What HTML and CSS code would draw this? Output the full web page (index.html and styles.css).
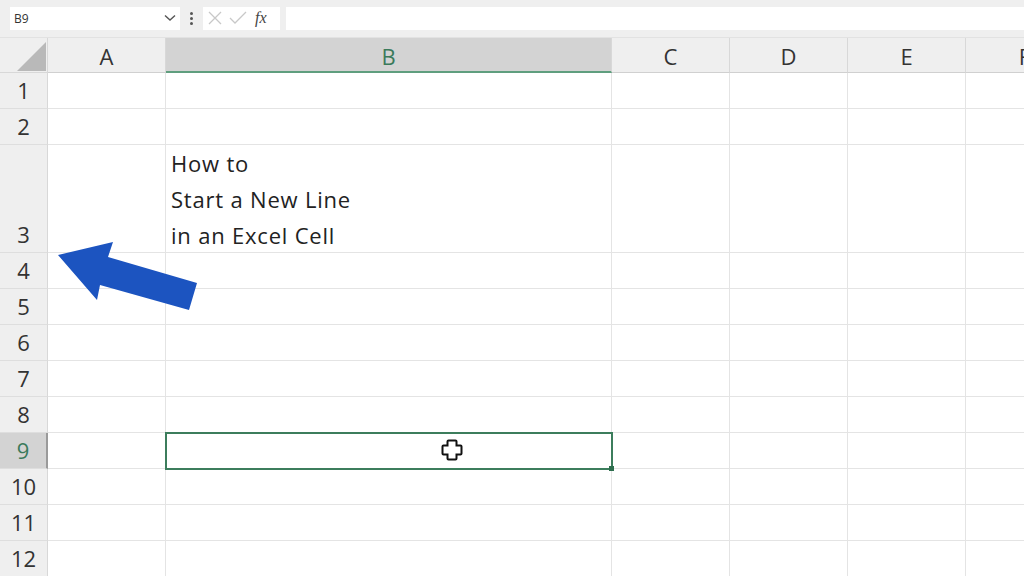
FILE: index.html
```html
<!DOCTYPE html>
<html lang="en">
<head>
    <meta charset="UTF-8">
    <title>Excel - new line in cell</title>
    <link rel="stylesheet" href="styles.css">
</head>
<body>
    <div class="app">
        <!-- formula bar -->
        <div class="formula-bar">
            <div class="name-box">
                <span>B9</span>
                <svg class="chevron" width="12" height="8" viewBox="0 0 12 8"><path d="M1 1.5 L6 6 L11 1.5" fill="none" stroke="#555" stroke-width="1.4"/></svg>
            </div>
            <div class="grip">
                <span></span><span></span><span></span>
            </div>
            <div class="fx-box">
                <svg width="16" height="16" viewBox="0 0 16 16"><path d="M2 2 L14 14 M14 2 L2 14" stroke="#c8c8c8" stroke-width="1.3"/></svg>
                <svg width="18" height="16" viewBox="0 0 18 16"><path d="M1 8 L6 13 L17 2" fill="none" stroke="#c8c8c8" stroke-width="1.3"/></svg>
                <span class="fx">fx</span>
            </div>
            <div class="formula-input"></div>
        </div>

        <!-- grid -->
        <div class="sheet">
            <div class="corner">
                <svg width="48" height="35" viewBox="0 0 48 35"><polygon points="17,33 46,33 46,4" fill="#b9b9b9"/></svg>
            </div>
            <div class="col-head">A</div>
            <div class="col-head active">B</div>
            <div class="col-head">C</div>
            <div class="col-head">D</div>
            <div class="col-head">E</div>
            <div class="col-head">F</div>

            <div class="row-head">1</div>
            <div class="cell"></div><div class="cell"></div><div class="cell"></div><div class="cell"></div><div class="cell"></div><div class="cell"></div>

            <div class="row-head">2</div>
            <div class="cell"></div><div class="cell"></div><div class="cell"></div><div class="cell"></div><div class="cell"></div><div class="cell"></div>

            <div class="row-head">3</div>
            <div class="cell"></div>
            <div class="cell text">How to<br>Start a New Line<br>in an Excel Cell</div>
            <div class="cell"></div><div class="cell"></div><div class="cell"></div><div class="cell"></div>

            <div class="row-head">4</div>
            <div class="cell"></div><div class="cell"></div><div class="cell"></div><div class="cell"></div><div class="cell"></div><div class="cell"></div>

            <div class="row-head">5</div>
            <div class="cell"></div><div class="cell"></div><div class="cell"></div><div class="cell"></div><div class="cell"></div><div class="cell"></div>

            <div class="row-head">6</div>
            <div class="cell"></div><div class="cell"></div><div class="cell"></div><div class="cell"></div><div class="cell"></div><div class="cell"></div>

            <div class="row-head">7</div>
            <div class="cell"></div><div class="cell"></div><div class="cell"></div><div class="cell"></div><div class="cell"></div><div class="cell"></div>

            <div class="row-head">8</div>
            <div class="cell"></div><div class="cell"></div><div class="cell"></div><div class="cell"></div><div class="cell"></div><div class="cell"></div>

            <div class="row-head active">9</div>
            <div class="cell"></div>
            <div class="cell selected"></div>
            <div class="cell"></div><div class="cell"></div><div class="cell"></div><div class="cell"></div>

            <div class="row-head">10</div>
            <div class="cell"></div><div class="cell"></div><div class="cell"></div><div class="cell"></div><div class="cell"></div><div class="cell"></div>

            <div class="row-head">11</div>
            <div class="cell"></div><div class="cell"></div><div class="cell"></div><div class="cell"></div><div class="cell"></div><div class="cell"></div>

            <div class="row-head">12</div>
            <div class="cell"></div><div class="cell"></div><div class="cell"></div><div class="cell"></div><div class="cell"></div><div class="cell"></div>
        </div>

        <!-- blue arrow pointing at row 3 -->
        <svg class="arrow" width="160" height="80" viewBox="50 235 160 80">
            <polygon points="58,255 113,242 108,257 197,283 189,310 100,285 97,300" fill="#1c54c0"/>
        </svg>

        <!-- mouse cursor -->
        <svg class="cursor" width="22" height="22" viewBox="0 0 22 22">
            <path d="M7.5 1.5 H14.5 Q15.5 1.5 15.5 2.5 V6.5 H19.5 Q20.5 6.5 20.5 7.5 V14.5 Q20.5 15.5 19.5 15.5 H15.5 V19.5 Q15.5 20.5 14.5 20.5 H7.5 Q6.5 20.5 6.5 19.5 V15.5 H2.5 Q1.5 15.5 1.5 14.5 V7.5 Q1.5 6.5 2.5 6.5 H6.5 V2.5 Q6.5 1.5 7.5 1.5 Z" fill="#fff" stroke="#111" stroke-width="2"/>
        </svg>
    </div>
</body>
</html>
```

FILE: styles.css
```css
* {
    margin: 0;
    padding: 0;
    box-sizing: border-box;
}

body {
    font-family: "Open Sans", "Noto Sans", sans-serif;
    background-color: #fff;
    width: 1024px;
    height: 576px;
    overflow: hidden;
}

.app {
    position: relative;
    width: 1024px;
    height: 576px;
    overflow: hidden;
}

/* formula bar */
.formula-bar {
    height: 38px;
    background-color: #efefef;
    display: flex;
    align-items: center;
    padding: 0 0 1px 10px;
    border-bottom: 1px solid #e2e2e2;
}

.name-box {
    width: 170px;
    height: 23px;
    background-color: #fff;
    display: flex;
    align-items: center;
    justify-content: space-between;
    padding: 0 4px 0 4px;
    font-size: 12px;
    color: #333;
}

.grip {
    width: 23px;
    display: flex;
    flex-direction: column;
    align-items: center;
    gap: 2px;
}

.grip span {
    width: 3px;
    height: 3px;
    background-color: #555;
    border-radius: 50%;
}

.fx-box {
    width: 77px;
    height: 23px;
    background-color: #fff;
    display: flex;
    align-items: center;
    gap: 6px;
    padding-left: 4px;
}

.fx {
    font-family: "Liberation Serif", serif;
    font-style: italic;
    font-size: 16px;
    color: #444;
    margin-left: 2px;
}

.formula-input {
    flex: 1;
    height: 23px;
    background-color: #fff;
    margin-left: 6px;
}

/* sheet grid */
.sheet {
    display: grid;
    grid-template-columns: 48px 118px 446px 118px 118px 118px 118px;
    grid-template-rows: 35px 36px 36px 108px repeat(9, 36px);
}

.corner {
    background-color: #efefef;
    border-right: 1px solid #d8d8d8;
    border-bottom: 1px solid #d8d8d8;
}

.corner svg {
    display: block;
}

.col-head {
    background-color: #efefef;
    border-right: 1px solid #d8d8d8;
    border-bottom: 1px solid #d0d0d0;
    display: flex;
    align-items: center;
    justify-content: center;
    font-size: 22px;
    color: #333;
    padding-top: 2px;
}

.col-head.active {
    background-color: #d3d3d3;
    color: #3a7a5b;
    border-bottom: 2px solid #5f9e7e;
}

.row-head {
    background-color: #efefef;
    border-right: 1px solid #d8d8d8;
    border-bottom: 1px solid #dedede;
    display: flex;
    align-items: flex-end;
    justify-content: center;
    font-size: 22px;
    line-height: 35px;
    color: #333;
}

.row-head.active {
    background-color: #d3d3d3;
    color: #3a7a5b;
    border-right: 2px solid #9a9a9a;
}

.cell {
    border-right: 1px solid #e4e4e4;
    border-bottom: 1px solid #e4e4e4;
}

.cell.text {
    font-size: 22px;
    letter-spacing: 0.8px;
    line-height: 36px;
    color: #222;
    padding-left: 5px;
}

.cell.selected {
    position: relative;
    outline: 2px solid #3c7d5c;
    outline-offset: -1px;
}

.cell.selected::after {
    content: '';
    position: absolute;
    right: -3px;
    bottom: -3px;
    width: 5px;
    height: 5px;
    background-color: #2e6e4e;
}

/* overlays */
.arrow {
    position: absolute;
    left: 50px;
    top: 235px;
}

.cursor {
    position: absolute;
    left: 441px;
    top: 439px;
}
```
